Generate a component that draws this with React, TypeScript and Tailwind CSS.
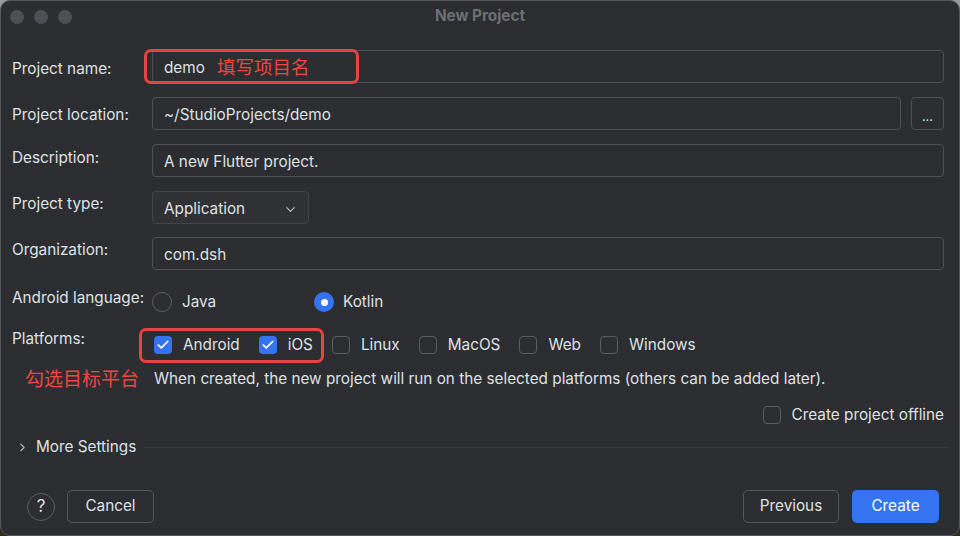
import React from 'react';
import { ChevronDown, ChevronRight, Check } from 'lucide-react';

const font = { fontFamily: 'Inter, "Noto Sans CJK SC", sans-serif' };

function Label({ children, pad }: { children: React.ReactNode; pad: string }) {
  return <div className={`w-[140px] shrink-0 text-[15.3px] text-[#dfe1e5] ${pad}`}>{children}</div>;
}

function Field({ value, className = '' }: { value: string; className?: string }) {
  return (
    <div className={`flex h-[33px] items-center rounded-[4px] border border-[#4e5157] px-[11px] pt-[3px] text-[15.3px] text-[#dfe1e5] ${className}`}>
      {value}
    </div>
  );
}

function Checkbox({ checked, label }: { checked?: boolean; label: string }) {
  return (
    <div className="flex items-center gap-[11px]">
      {checked ? (
        <div className="flex h-[18px] w-[18px] items-center justify-center rounded-[4px] bg-[#3574f0]">
          <Check size={14} strokeWidth={3} className="text-white" />
        </div>
      ) : (
        <div className="h-[18px] w-[18px] rounded-[4px] border border-[#5a5d63]" />
      )}
      <span className="text-[15.3px] text-[#dfe1e5]">{label}</span>
    </div>
  );
}

export default function App() {
  return (
    <div className="h-[536px] w-[960px] bg-linear-to-b from-[#9a9a9a] via-[#3a3a3a] to-[#2f2b1d]" style={font}>
      <div className="flex h-full w-full flex-col rounded-[10px] border border-[#55585e] bg-[#2b2d30]">
        {/* title bar */}
        <div className="relative flex h-[31px] shrink-0 items-center px-[9px]">
          <div className="flex gap-[10px]">
            <div className="h-[14px] w-[14px] rounded-full bg-[#4d4f54]" />
            <div className="h-[14px] w-[14px] rounded-full bg-[#4d4f54]" />
            <div className="h-[14px] w-[14px] rounded-full bg-[#4d4f54]" />
          </div>
          <div className="flex-1 pr-[62px] text-center text-[15.3px] font-bold text-[#6c6f75]">New Project</div>
        </div>

        <div className="flex flex-col pl-[11px] pr-[15px] pt-[18px]">
          {/* Project name */}
          <div className="relative flex">
            <Label pad="pt-[7.5px]">Project name:</Label>
            <Field value="demo" className="flex-1" />
            <div className="absolute left-[132px] top-[-1px] flex h-[35px] w-[215px] items-center rounded-[7px] border-[3px] border-[#e8443f] pl-[70px] pt-[2px]">
              <span className="text-[18.5px] text-[#f0463f]">填写项目名</span>
            </div>
          </div>

          {/* Project location */}
          <div className="mt-[14px] flex">
            <Label pad="pt-[6.5px]">Project location:</Label>
            <Field value="~/StudioProjects/demo" className="flex-1" />
            <div className="ml-[10px] flex h-[33px] w-[33px] items-end justify-center rounded-[4px] border border-[#4e5157] pb-[6px] text-[13px] leading-none text-[#dfe1e5]">
              ...
            </div>
          </div>

          {/* Description */}
          <div className="mt-[14px] flex">
            <Label pad="pt-[2.5px]">Description:</Label>
            <Field value="A new Flutter project." className="flex-1" />
          </div>

          {/* Project type */}
          <div className="mt-[14px] flex">
            <Label pad="pt-[1.5px]">Project type:</Label>
            <div className="flex h-[33px] w-[157px] items-center justify-between rounded-[4px] border border-[#43454a] bg-[#2f3134] pl-[11px] pr-[10px] pt-[3px] text-[15.3px] text-[#dfe1e5]">
              Application
              <ChevronDown size={15} className="text-[#b4b8bf]" />
            </div>
          </div>

          {/* Organization */}
          <div className="mt-[13px] flex">
            <Label pad="pt-[1.5px]">Organization:</Label>
            <Field value="com.dsh" className="flex-1" />
          </div>

          {/* Android language */}
          <div className="mt-[17px] flex">
            <div className="w-[140px] shrink-0 text-[15.3px] text-[#dfe1e5]">Android language:</div>
            <div className="flex items-center pt-[4px]">
              <div className="flex w-[162px] items-center gap-[10px]">
                <div className="h-[20px] w-[20px] rounded-full border border-[#5a5d63]" />
                <span className="text-[15.3px] text-[#dfe1e5]">Java</span>
              </div>
              <div className="flex items-center gap-[9px]">
                <div className="flex h-[20px] w-[20px] items-center justify-center rounded-full bg-[#3574f0]">
                  <div className="h-[7px] w-[7px] rounded-full bg-white" />
                </div>
                <span className="text-[15.3px] text-[#dfe1e5]">Kotlin</span>
              </div>
            </div>
          </div>

          {/* Platforms */}
          <div className="relative mt-[14px] flex">
            <div className="w-[140px] shrink-0 text-[15.3px] text-[#dfe1e5]">Platforms:</div>
            <div className="flex items-center gap-[19px] pl-[2px] pt-[6px]">
              <Checkbox checked label="Android" />
              <Checkbox checked label="iOS" />
              <Checkbox label="Linux" />
              <Checkbox label="MacOS" />
              <Checkbox label="Web" />
              <Checkbox label="Windows" />
            </div>
            <div className="absolute left-[127px] top-[0px] h-[35px] w-[185px] rounded-[7px] border-[3px] border-[#e8443f]" />
          </div>

          <div className="mt-[11px] flex items-center">
            <div className="w-[142px] shrink-0 pl-[13px] text-[19px] leading-[24px] text-[#f0463f]">勾选目标平台</div>
            <div className="text-[15.3px] text-[#dfe1e5]">
              When created, the new project will run on the selected platforms (others can be added later).
            </div>
          </div>

          <div className="mt-[12px] flex justify-end">
            <Checkbox label="Create project offline" />
          </div>

          {/* More Settings */}
          <div className="mt-[9px] flex items-center">
            <ChevronRight size={13} className="ml-[4px] text-[#b4b8bf]" />
            <span className="ml-[7px] text-[15.3px] text-[#dfe1e5]">More Settings</span>
            <div className="ml-[8px] mr-[-4px] h-px flex-1 bg-[#393b40]" />
          </div>
        </div>

        {/* footer */}
        <div className="mb-[12px] mt-auto flex items-center px-[26px]">
          <div className="flex h-[28px] w-[28px] items-center justify-center rounded-full border border-[#5a5d63] text-[17px] text-[#dfe1e5]">?</div>
          <div className="ml-[12px] flex h-[33px] w-[87px] items-center justify-center rounded-[5px] border border-[#55585e] text-[15.3px] text-[#dfe1e5]">Cancel</div>
          <div className="flex-1" />
          <div className="flex h-[33px] w-[96px] items-center justify-center rounded-[5px] border border-[#55585e] text-[15.3px] text-[#dfe1e5]">Previous</div>
          <div className="ml-[13px] mr-[-6px] flex h-[33px] w-[87px] items-center justify-center rounded-[5px] bg-[#3574f0] text-[15.3px] text-white">Create</div>
        </div>
      </div>
    </div>
  );
}
